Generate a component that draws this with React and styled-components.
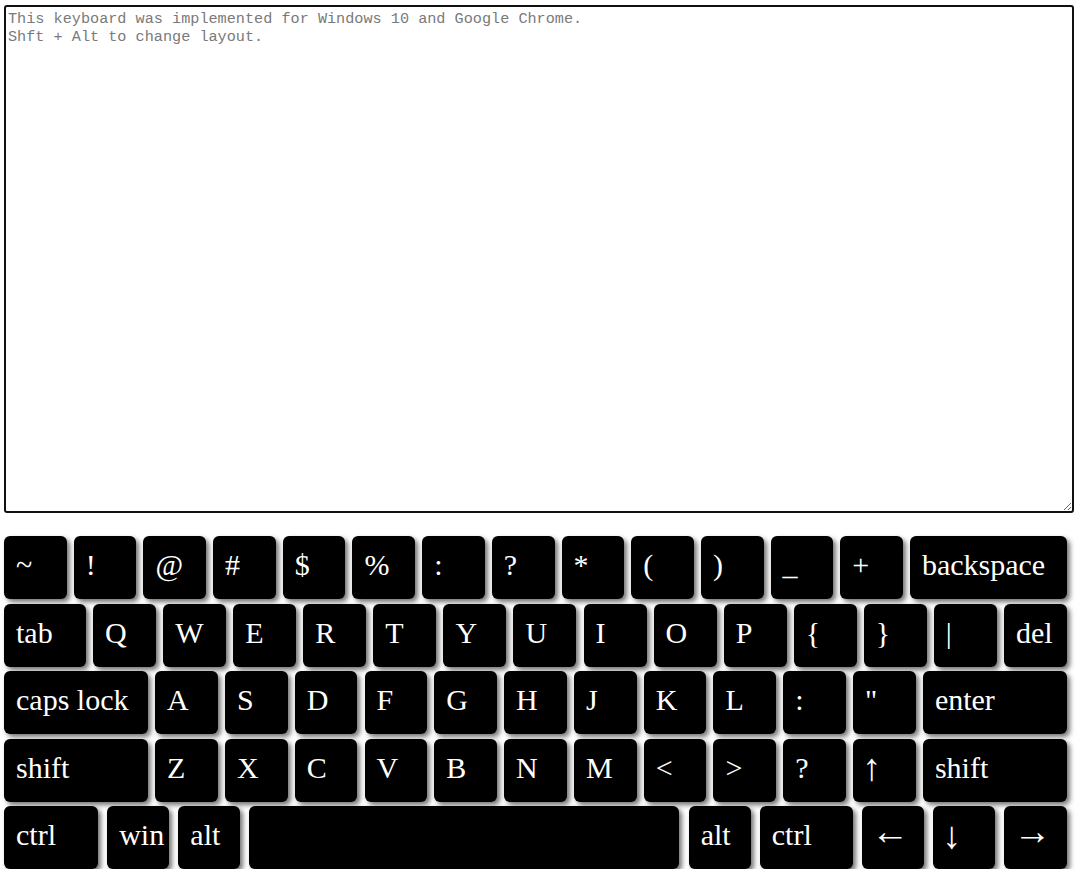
import React from "react";
import styled, { createGlobalStyle } from "styled-components";

const GlobalStyle = createGlobalStyle`
  html, body {
    margin: 0;
    padding: 0;
    background: #ffffff;
  }
  body {
    font-family: "Liberation Serif", "Times New Roman", serif;
  }
`;

const Page = styled.div`
  padding: 5px 0 0 4px;
`;

const TextArea = styled.textarea`
  display: block;
  box-sizing: border-box;
  width: 1070px;
  height: 508px;
  margin: 0;
  padding: 3px 2px 2px;
  border: 2px solid #111;
  border-radius: 3px;
  outline: none;
  font-family: "Liberation Mono", "DejaVu Sans Mono", monospace;
  font-size: 15.2px;
  line-height: 18px;
  color: #222;
  background: #fff;
  &::placeholder {
    color: #7a7a7a;
    opacity: 1;
  }
`;

const Keyboard = styled.div`
  display: flex;
  flex-direction: column;
  gap: 4.5px;
  width: 1063px;
  margin-top: 23px;
`;

const Row = styled.div`
  display: flex;
  justify-content: space-between;
`;

const Key = styled.div`
  box-sizing: border-box;
  flex: 0 0 auto;
  width: ${(p) => p.$w}px;
  height: 63px;
  padding: 12px 0 0 12px;
  background: #000;
  color: #fff;
  border-radius: 6px;
  box-shadow: 3px 3px 5px rgba(0, 0, 0, 0.55);
  font-family: "Liberation Serif", "Times New Roman", serif;
  font-size: 30px;
  line-height: 33px;
  white-space: nowrap;
  overflow: visible;
  user-select: none;
`;

const Arrow = styled.span`
  display: inline-block;
  font-size: 38px;
  line-height: 33px;
  transform: translate(-3px, ${(p) => p.$dy}px);
`;

const U = 62.7;

const rows = [
  [
    ["~", U], ["!", U], ["@", U], ["#", U], ["$", U], ["%", U], [":", U],
    ["?", U], ["*", U], ["(", U], [")", U], ["_", U], ["+", U], ["backspace", 157],
  ],
  [
    ["tab", 82], ["Q", 63], ["W", 63], ["E", 63], ["R", 63], ["T", 63], ["Y", 63],
    ["U", 63], ["I", 63], ["O", 63], ["P", 63], ["{", 63], ["}", 63], ["|", 63], ["del", 63],
  ],
  [
    ["caps lock", 144], ["A", U], ["S", U], ["D", U], ["F", U], ["G", U], ["H", U],
    ["J", U], ["K", U], ["L", U], [":", U], ["\"", U], ["enter", 144],
  ],
  [
    ["shift", 144], ["Z", U], ["X", U], ["C", U], ["V", U], ["B", U], ["N", U],
    ["M", U], ["<", U], [">", U], ["?", U], ["\u2191", U, 0], ["shift", 144],
  ],
  [
    ["ctrl", 94], ["win", 62], ["alt", 62], ["", 430], ["alt", 62], ["ctrl", 93],
    ["\u2190", 62, -3], ["\u2193", 62, 1], ["\u2192", 62.7, -3],
  ],
];

export default function App() {
  return (
    <>
      <GlobalStyle />
      <Page>
        <TextArea
          placeholder={
            "This keyboard was implemented for Windows 10 and Google Chrome.\nShft + Alt to change layout."
          }
        />
        <Keyboard>
          {rows.map((row, i) => (
            <Row key={i}>
              {row.map(([label, w, dy], j) => (
                <Key key={j} $w={w}>
                  {dy === undefined ? label : <Arrow $dy={dy}>{label}</Arrow>}
                </Key>
              ))}
            </Row>
          ))}
        </Keyboard>
      </Page>
    </>
  );
}
